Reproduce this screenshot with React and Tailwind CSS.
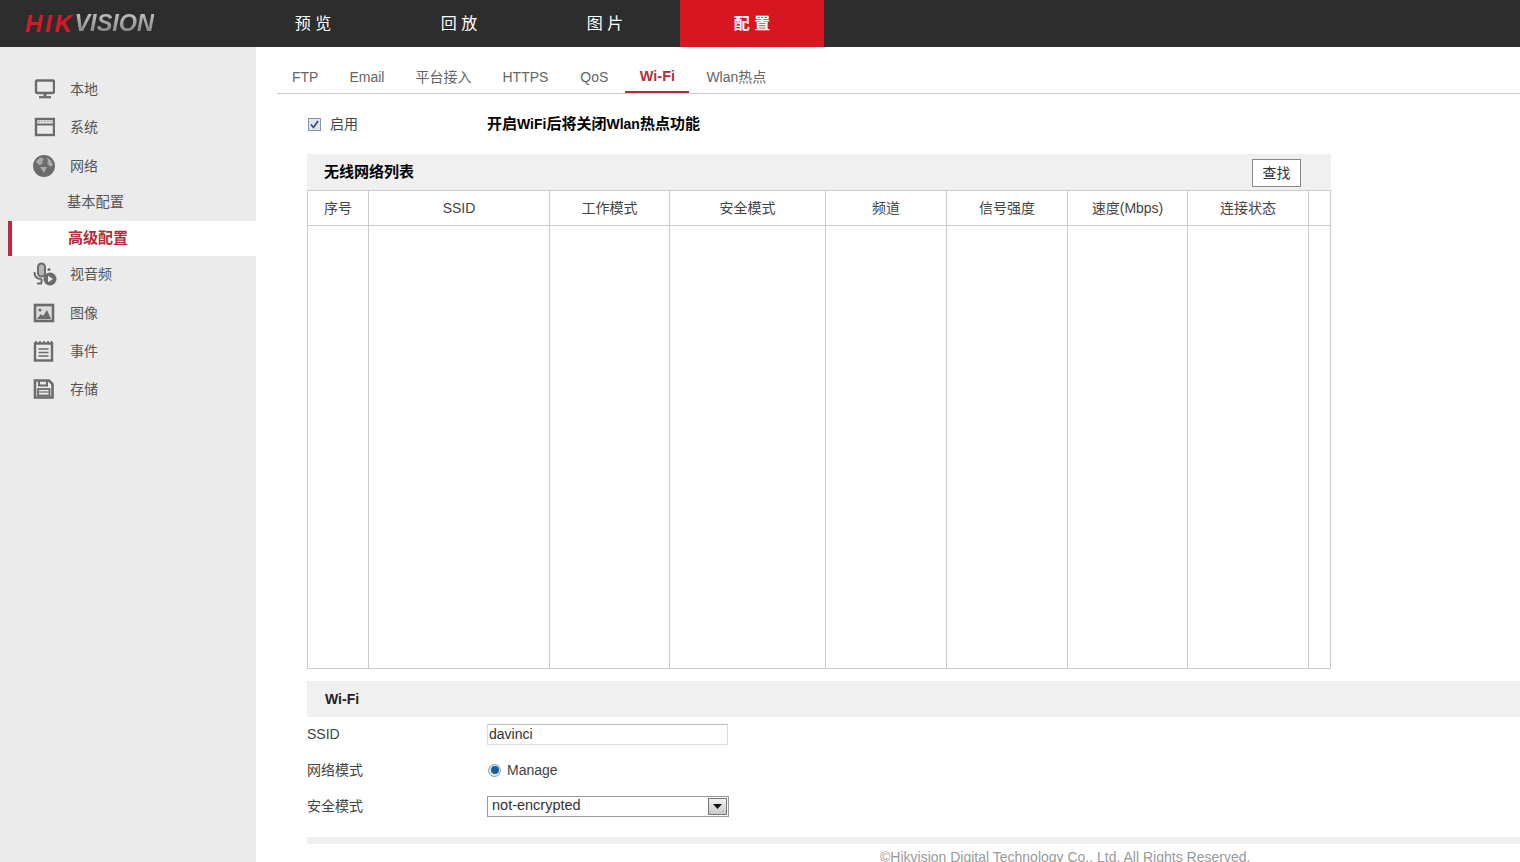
import React from "react";

const tabs = ["FTP", "Email", "平台接入", "HTTPS", "QoS", "Wi-Fi", "Wlan热点"];
const cols = ["序号", "SSID", "工作模式", "安全模式", "频道", "信号强度", "速度(Mbps)", "连接状态", ""];
const gridCols = "grid grid-cols-[61px_181px_120px_156px_121px_121px_120px_121px_23px]";

const MonitorIcon = () => (
  <svg width="22" height="20" viewBox="0 0 22 20" fill="none" stroke="#6b6b6b">
    <rect x="3" y="1.500" width="18" height="12.500" rx="1.500" strokeWidth="2.400" />
    <path d="M12 14v3" strokeWidth="3" />
    <path d="M6 18.200h12" strokeWidth="2.200" />
  </svg>
);

const SystemIcon = () => (
  <svg width="22" height="20" viewBox="0 0 22 20" fill="none" stroke="#6b6b6b">
    <rect x="3" y="2" width="18" height="16" strokeWidth="2.400" />
    <path d="M4 7.500h16" strokeWidth="2" />
    <path d="M5 4.600h14" strokeWidth="1.400" strokeDasharray="2 1" stroke="#a8a8a8" />
  </svg>
);

const GlobeIcon = () => (
  <svg width="22" height="24" viewBox="0 0 22 24">
    <circle cx="11" cy="12" r="11" fill="#6b6b6b" />
    <path d="M3 8c1-2 3-4 5-4.500l3 1.500-2 3 1 2-4 1zM7 13h7l-3 6zM14 3.500l4 3 2 5-3 1-3-3 1-2z" fill="#a9a9a9" />
  </svg>
);

const MicIcon = () => (
  <svg width="24" height="24" viewBox="0 0 24 24" fill="none">
    <rect x="5" y="1.500" width="7" height="13" rx="3.500" fill="#b5b5b5" stroke="#6b6b6b" strokeWidth="2" />
    <path d="M1.500 10c0 5 3 7 7 7M8.500 17v4M4 21.500h5" stroke="#6b6b6b" strokeWidth="2" />
    <circle cx="16" cy="7.500" r="1.500" fill="#6b6b6b" />
    <circle cx="17" cy="17" r="6.500" fill="#6b6b6b" />
    <path d="M15 13.800v6.400l5-3.200z" fill="#ebebeb" />
  </svg>
);

const ImageIcon = () => (
  <svg width="22" height="20" viewBox="0 0 22 20" fill="none">
    <rect x="2" y="2" width="18" height="16" stroke="#6b6b6b" strokeWidth="2.600" fill="#dcdcdc" />
    <circle cx="7" cy="7" r="1.600" fill="#6b6b6b" />
    <path d="M4 16l4-5 2 2 4-6 4 9z" fill="#6b6b6b" />
  </svg>
);

const EventIcon = () => (
  <svg width="22" height="22" viewBox="0 0 22 22" fill="none" stroke="#6b6b6b">
    <rect x="2" y="3.500" width="17" height="17" strokeWidth="2.400" />
    <path d="M3 1v3M7 1v3M11 1v3M15 1v3M18.500 1v3" strokeWidth="1.600" />
    <path d="M5.500 9h10M5.500 12.500h10M5.500 16h10" strokeWidth="1.600" />
  </svg>
);

const SaveIcon = () => (
  <svg width="22" height="20" viewBox="0 0 22 20" fill="none" stroke="#6b6b6b">
    <path d="M2 1.500h14l3.500 3.500v13.500H2z" strokeWidth="2.600" />
    <path d="M6 2v4.500h8V2" strokeWidth="2" />
    <rect x="5" y="10" width="11.500" height="6.500" strokeWidth="1.800" />
    <path d="M5 13h11" strokeWidth="1.200" />
  </svg>
);

const SideItem = ({icon, label, className}) => (
  <div className={`flex items-center pl-[33px] ${className}`}>
    <span className="flex w-[37px] shrink-0">{icon}</span>
    <span className="text-[14px] text-[#555]">{label}</span>
  </div>
);

const Sidebar = () => (
  <aside className="w-[256px] shrink-0 bg-[#ebebeb] pt-[23px]">
    <SideItem icon={<MonitorIcon />} label="本地" className="h-[38px]" />
    <SideItem icon={<SystemIcon />} label="系统" className="h-[38px]" />
    <SideItem icon={<GlobeIcon />} label="网络" className="h-[38px] mt-px" />
    <div className="flex h-[36px] items-center pl-[67px] text-[14.250px] text-[#555]">基本配置</div>
    <div className="ml-[8px] flex h-[35px] items-center border-l-4 border-[#c5283a] bg-white pl-[56px] text-[15px] font-bold text-[#b52d3a]">高级配置</div>
    <SideItem icon={<MicIcon />} label="视音频" className="h-[36px]" />
    <SideItem icon={<ImageIcon />} label="图像" className="h-[38px] mt-[2px]" />
    <SideItem icon={<EventIcon />} label="事件" className="h-[38px]" />
    <SideItem icon={<SaveIcon />} label="存储" className="h-[38px]" />
  </aside>
);

const TopBar = () => (
  <header className="flex h-[47px] shrink-0 bg-[#2d2d2d] text-white">
    <div className="flex w-[240px] items-center pl-[25px] text-[24px] font-bold italic leading-none">
      <span className="tracking-[2.700px] text-[#d7182a]">HIK</span>
      <span className="bg-gradient-to-b from-[#c4c4c4] to-[#7f7f7f] bg-clip-text text-[23.500px] text-transparent">VISION</span>
    </div>
    <div className="flex w-[146px] items-center justify-center text-[16px]">预 览</div>
    <div className="flex w-[146px] items-center justify-center text-[16px]">回 放</div>
    <div className="flex w-[146px] items-center justify-center text-[16px]">图 片</div>
    <div className="ml-[2px] flex w-[144px] items-center justify-center bg-[#d7171f] text-[16px] font-bold">配 置</div>
  </header>
);

const Tabs = () => (
  <div className="ml-[21px] flex h-[47px] gap-px border-b border-[#ccc] pt-[15px]">
    {tabs.map((t) => (
      <div
        key={t}
        className={t === "Wi-Fi"
          ? "ml-px mr-px h-[31px] w-[64px] border-b-2 border-[#b52d3a] pt-[5px] text-center text-[14.500px] font-bold leading-[18px] text-[#b52d3a]"
          : t === "QoS"
            ? "ml-px h-[31px] px-[15px] pt-[6px] text-[14px] leading-[18px] text-[#666]"
            : "h-[31px] px-[15px] pt-[6px] text-[14px] leading-[18px] text-[#666]"}
      >
        {t}
      </div>
    ))}
  </div>
);

const WifiTable = () => (
  <div className="w-[1024px]">
    <div className="flex h-[36px] items-center justify-between bg-[#f0f0f0] pl-[17px] pr-[30px]">
      <span className="text-[15px] font-bold text-black">无线网络列表</span>
      <button className="mt-[2px] h-[28px] w-[49px] border border-[#888] bg-white text-[14px] text-[#333]">查找</button>
    </div>
    <div className={`${gridCols} h-[36px] border-y border-[#ccc]`}>
      {cols.map((c, i) => (
        <div key={i} className="flex items-center justify-center border-l border-[#ccc] text-[14px] text-[#444] last:border-r">{c}</div>
      ))}
    </div>
    <div className={`${gridCols} h-[443px] border-b border-[#ccc]`}>
      {cols.map((c, i) => (
        <div key={i} className="border-l border-[#ccc] last:border-r" />
      ))}
    </div>
  </div>
);

const FormRow = ({label, className = "h-[36px]", children}) => (
  <div className={`flex items-center text-[14px] text-[#444] ${className}`}>
    <span className="w-[180px] shrink-0">{label}</span>
    {children}
  </div>
);

export default function App() {
  return (
    <div className="flex h-[862px] flex-col overflow-hidden bg-white font-['Liberation_Sans','Noto_Sans_CJK_SC',sans-serif]">
      <TopBar />
      <div className="flex flex-1">
        <Sidebar />
        <main className="min-w-0 flex-1">
          <Tabs />
          <div className="pl-[51px]">
            <div className="flex h-[60px] items-center text-[14px]">
              <span className="ml-px flex h-[13px] w-[13px] items-center justify-center border border-[#8a93a8] bg-[#dfe3ee]">
                <svg width="9" height="9" viewBox="0 0 9 9" fill="none">
                  <path d="M1 4.500l2.500 3L8 1" stroke="#2f3f8f" strokeWidth="1.600" />
                </svg>
              </span>
              <span className="ml-[9px] w-[157px] text-[#444]">启用</span>
              <span className="font-bold text-black">
                <span className="text-[15px]">开启</span>WiFi<span className="text-[15px]">后将关闭</span>Wlan<span className="text-[15px]">热点功能</span>
              </span>
            </div>
            <WifiTable />
            <div className="mt-[12px] flex h-[36px] items-center bg-[#f0f0f0] pl-[18px] text-[14px] font-bold text-[#222]">Wi-Fi</div>
            <div>
              <FormRow label="SSID" className="h-[35px]">
                <input
                  readOnly
                  value="davinci"
                  className="h-[21px] w-[241px] border border-[#ddd] border-t-[#bbb] px-[1px] text-[14px] text-[#333] outline-none"
                />
              </FormRow>
              <FormRow label="网络模式">
                <span className="ml-px flex h-[13px] w-[13px] items-center justify-center rounded-full border border-[#8f9cae] bg-[#dfe7f0]">
                  <span className="h-[8px] w-[8px] rounded-full bg-[#1a5f96]" />
                </span>
                <span className="ml-[6px]">Manage</span>
              </FormRow>
              <FormRow label="安全模式">
                <div className="flex h-[21px] w-[242px] items-center justify-between border border-[#999] pl-[4px] pr-px text-[14.500px] text-[#333]">
                  <span>not-encrypted</span>
                  <span className="flex h-[17px] w-[19px] items-center justify-center border border-[#777] bg-gradient-to-b from-[#f2f2f2] to-[#c8c8c8]">
                    <svg width="9" height="5" viewBox="0 0 9 5"><path d="M0 0h9L4.500 5z" fill="#111" /></svg>
                  </span>
                </div>
              </FormRow>
            </div>
            <div className="mt-[13px] h-[7px] bg-[#f0f0f0]" />
            <div className="ml-[573px] mt-[3px] whitespace-nowrap text-[14px] text-[#999]">©Hikvision Digital Technology Co., Ltd. All Rights Reserved.</div>
          </div>
        </main>
      </div>
    </div>
  );
}
